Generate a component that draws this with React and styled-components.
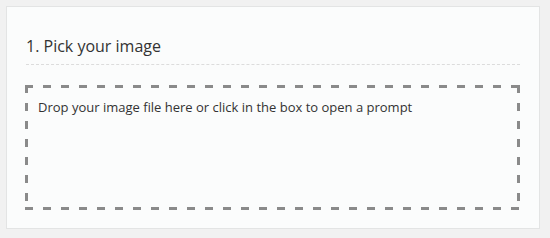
import React from "react";
import styled, { createGlobalStyle } from "styled-components";

const Global = createGlobalStyle`
  html, body { margin: 0; padding: 0; background: #f1f1f1; }
  body { font-family: "Open Sans", "Liberation Sans", sans-serif; }
`;

const Page = styled.div`
  width: 550px;
  height: 238px;
  padding: 6px 10px 9px 6px;
  box-sizing: border-box;
`;

const Card = styled.section`
  background: #fbfcfc;
  border: 1px solid #e3e4e4;
  height: 100%;
  box-sizing: border-box;
  padding: 27px 19px 18px 18px;
  display: flex;
  flex-direction: column;
`;

const Title = styled.h2`
  margin: 0 0 20px 1px;
  padding-bottom: 6px;
  font-size: 16px;
  font-weight: 400;
  color: #333;
  line-height: 24px;
  border-bottom: 1px dashed #dcdcdc;
`;

const dash = "#8a8a8a";

const DropZone = styled.div`
  flex: 1;
  padding: 13px 13px;
  font-size: 13px;
  line-height: 18px;
  color: #333;
  cursor: pointer;
  background:
    linear-gradient(to right, ${dash} 8px, transparent 8px) left top / 18px 3px repeat-x,
    linear-gradient(to right, ${dash} 8px, transparent 8px) left bottom / 18px 3px repeat-x,
    linear-gradient(to bottom, ${dash} 8px, transparent 8px) left top / 3px 18px repeat-y,
    linear-gradient(to bottom, ${dash} 8px, transparent 8px) right top / 3px 18px repeat-y;
`;

export default function App() {
  return (
    <>
      <Global />
      <Page>
        <Card>
          <Title>1. Pick your image</Title>
          <DropZone>Drop your image file here or click in the box to open a prompt</DropZone>
        </Card>
      </Page>
    </>
  );
}
